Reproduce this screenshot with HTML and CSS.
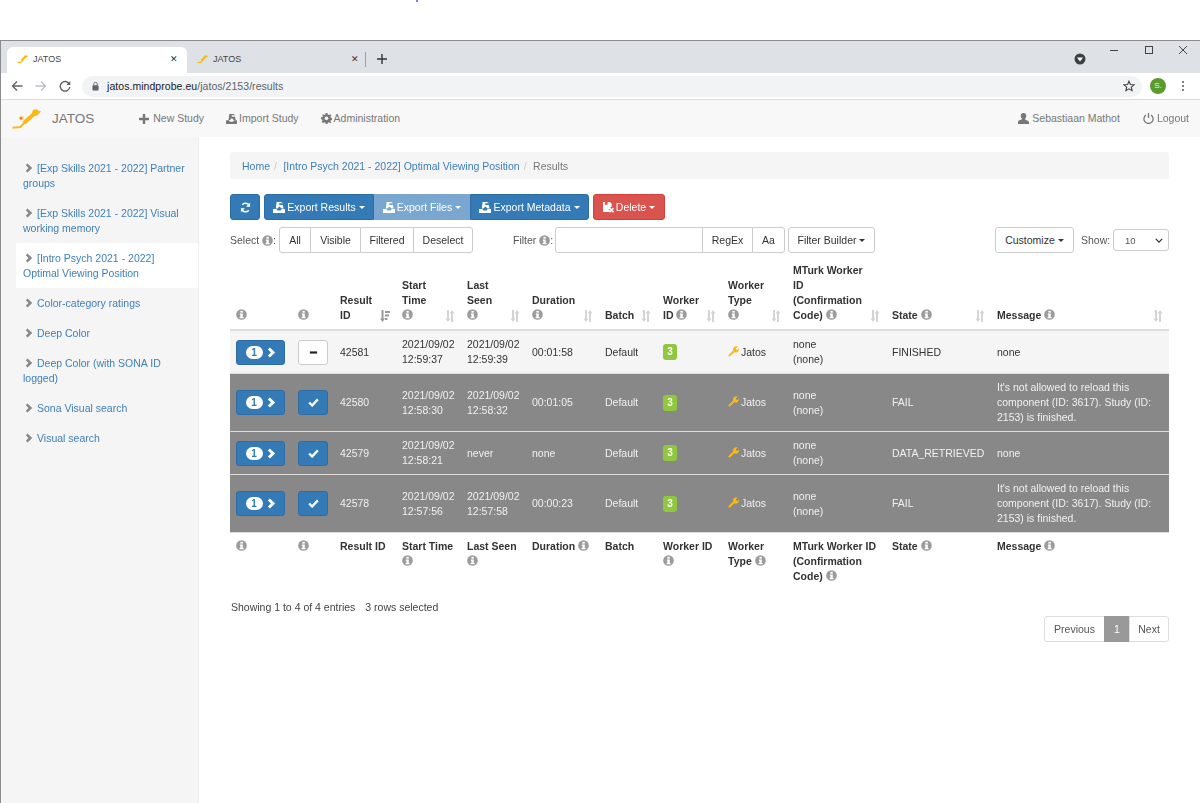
FILE: index.html
```html
<!DOCTYPE html>
<html lang="en">
<head>
<meta charset="utf-8">
<title>JATOS</title>
<link rel="stylesheet" href="styles.css">
</head>
<body>
<svg class="sprite" aria-hidden="true">
  <symbol id="info" viewBox="0 0 12 12"><circle cx="6" cy="6" r="5.800" fill="currentColor"/><rect x="4.800" y="2" width="2.600" height="2" fill="#fff"/><path d="M4.200 5h3.200v3.600h.9V10H3.900V8.600h.9V6.300h-.6z" fill="#fff"/></symbol>
  <symbol id="sort" viewBox="0 0 10 12"><path d="M2 0h2v8.500h1.500L3 12 .5 8.500H2zM8 12H6V3.500H4.500L7 0l2.500 3.500H8z" fill="currentColor"/></symbol>
  <symbol id="sortact" viewBox="0 0 10 12"><path d="M1.500 0h2v8.500H5L2.500 12 0 8.500h1.500zM5 1h5v2H5zM5 4.500h4v2H5zM5 8h2.500v2H5z" fill="currentColor"/></symbol>
  <symbol id="export" viewBox="0 0 12 11"><path d="M0 7h3.200l1.300 1.400h3L8.800 7H12v4H0z" fill="currentColor"/><path d="M2.800 6.600 3.600 0H8l2.200 1.300H6.200V3h3.600l.8 3.600H8.500L6.300 4.400 4.500 6.600z" fill="currentColor"/></symbol>
  <symbol id="wrench" viewBox="0 0 12 12"><path d="M1.600 11.800.2 10.400 5.600 5C5.200 3.400 5.700 1.800 7 .9 8.100.2 9.400.1 10.500.5L8.600 2.500l.3 1.400 1.400.4 1.400-1.800C12.100 3.800 11.800 5.300 10.900 6.200 9.800 7.200 8.400 7.400 7 6.900z" fill="currentColor"/></symbol>
  <symbol id="chev" viewBox="0 0 10 12"><path d="M3.200.5 9 6l-5.800 5.500L1 9.300 4.400 6 1 2.700z" fill="currentColor"/></symbol>
  <symbol id="caret" viewBox="0 0 8 4"><path d="M0 0h8L4 4z" fill="currentColor"/></symbol>
  <symbol id="fav" viewBox="0 0 11 8"><path d="M.5 7.500h3l3-3" fill="none" stroke="#fdb913" stroke-width="1.300"/><path d="M4.500 5.500 8.500 1.500" fill="none" stroke="#fdb913" stroke-width="2"/><circle cx="8.500" cy="1.500" r="1.300" fill="#fdb913"/><path d="M8.500.8h2.500v1H8.500z" fill="#fdb913"/></symbol>
</svg>

<div class="top-gap"><span class="speck"></span></div>
<div class="window">
  <div class="tabstrip">
    <div class="tab tab-active">
      <svg class="favicon"><use href="#fav"/></svg>
      <span class="tab-title">JATOS</span><span class="tab-close">✕</span>
    </div>
    <div class="tab">
      <svg class="favicon"><use href="#fav"/></svg>
      <span class="tab-title">JATOS</span><span class="tab-close">✕</span>
    </div>
    <span class="tab-sep"></span>
    <svg class="tab-plus" viewBox="0 0 10 10"><path d="M4.300 0h1.400v4.300H10v1.400H5.700V10H4.300V5.700H0V4.300h4.300z" fill="#333"/></svg>
    <span class="strip-fill"></span>
    <svg class="media" viewBox="0 0 12 12"><circle cx="6" cy="6" r="5.500" fill="#3c4043"/><path d="M3 4.500h6L6 8.500z" fill="#fff"/></svg>
    <div class="win-controls">
      <svg viewBox="0 0 10 10"><rect x="1" y="5" width="8" height="1" fill="#444"/></svg>
      <svg viewBox="0 0 10 10"><rect x="1.500" y="1.500" width="7" height="7" fill="none" stroke="#444"/></svg>
      <svg viewBox="0 0 10 10"><path d="M1 1l8 8M9 1l-8 8" stroke="#444" fill="none"/></svg>
    </div>
  </div>
  <div class="toolbar">
    <svg class="tb-ic" viewBox="0 0 12 12"><path d="M11.500 6H1.500M6 1.500 1.500 6 6 10.500" fill="none" stroke="#5f6368" stroke-width="1.400"/></svg>
    <svg class="tb-ic" viewBox="0 0 12 12"><path d="M.5 6h10M6 1.500 10.500 6 6 10.500" fill="none" stroke="#bdc1c6" stroke-width="1.400"/></svg>
    <svg class="tb-ic" viewBox="0 0 12 12"><path d="M10.300 4A4.800 4.800 0 1 0 10.800 7" fill="none" stroke="#5f6368" stroke-width="1.400"/><path d="M11.300 1v4h-4z" fill="#5f6368"/></svg>
    <div class="omnibox">
      <svg class="lock" viewBox="0 0 8 10"><rect x=".5" y="4" width="7" height="6" rx="1" fill="#5f6368"/><path d="M2 4.500V2.800a2 2 0 0 1 4 0v1.700" fill="none" stroke="#5f6368"/></svg>
      <span class="url"><span class="url-host">jatos.mindprobe.eu</span>/jatos/2153/results</span>
      <svg class="star" viewBox="0 0 12 12"><path d="M6 1.200 7.400 4.500l3.600.3-2.700 2.400.8 3.500L6 8.800 2.900 10.700l.8-3.500L1 4.800l3.600-.3z" fill="none" stroke="#444" stroke-width="1.100"/></svg>
    </div>
    <span class="avatar">S.</span>
    <svg class="menu-dots" viewBox="0 0 4 12"><circle cx="2" cy="2" r="1.100" fill="#5f6368"/><circle cx="2" cy="6" r="1.100" fill="#5f6368"/><circle cx="2" cy="10" r="1.100" fill="#5f6368"/></svg>
  </div>

  <nav class="navbar">
    <svg class="logo" viewBox="0 0 29 20"><path d="M.5 18.700 8.500 18 12.500 13.500" fill="none" stroke="#fdb913" stroke-width="2"/><path d="M12 14 23 4" fill="none" stroke="#fdb913" stroke-width="4"/><circle cx="23.500" cy="3.500" r="3.200" fill="#fdb913"/><path d="M24 2h5l-1.500 2.500H24z" fill="#fdb913"/><circle cx="9.500" cy="9" r="2.400" fill="#fde08a"/><circle cx="9" cy="9.300" r="1.400" fill="#f0742a"/></svg>
    <span class="brand">JATOS</span>
    <a class="nav-link nav-new"><svg class="nav-ic" viewBox="0 0 10 10"><path d="M3.800 0h2.400v3.800H10v2.400H6.200V10H3.800V6.200H0V3.800h3.800z" fill="currentColor"/></svg>New Study</a>
    <a class="nav-link nav-import"><svg class="nav-ic"><use href="#export"/></svg>Import Study</a>
    <a class="nav-link"><svg class="nav-ic-gear" viewBox="0 0 12 12"><path d="M5 0h2l.3 1.700 1.200.5L10 1.300l1.300 1.400-1 1.400.5 1.200 1.700.3v2l-1.700.3-.5 1.200 1 1.400L10 11l-1.500-.9-1.200.5L7 12H5l-.3-1.400-1.200-.5L2 11 .7 9.600l1-1.400-.5-1.200L0 6.700v-2l1.700-.3.5-1.200-1-1.400L2 1.300l1.500.9 1.200-.5z" fill="currentColor"/><circle cx="6" cy="5.800" r="2" fill="#f8f8f8"/></svg>Administration</a>
    <span class="strip-fill"></span>
    <a class="nav-link nav-user"><svg class="nav-ic" viewBox="0 0 12 12"><path d="M6 0c2 0 3 1.400 3 3.200 0 1.300-.6 2.400-1.300 3v1l3.300 1.500c.6.300 1 .8 1 1.500V12H0v-2.200c0-.7.400-1.200 1-1.500l3.300-1.500v-1C3.600 5.600 3 4.500 3 3.200 3 1.400 4 0 6 0z" fill="currentColor"/></svg>Sebastiaan Mathot</a>
    <a class="nav-link nav-logout"><svg class="nav-ic" viewBox="0 0 12 12"><path d="M3.300 2.200a5 5 0 1 0 5.400 0" fill="none" stroke="currentColor" stroke-width="1.400"/><rect x="5.300" y="0" width="1.400" height="5.500" fill="currentColor"/></svg>Logout</a>
  </nav>

  <div class="main">
    <aside class="sidebar">
      <a class="study"><svg class="study-chev"><use href="#chev"/></svg>[Exp Skills 2021 - 2022] Partner groups</a>
      <a class="study"><svg class="study-chev"><use href="#chev"/></svg>[Exp Skills 2021 - 2022] Visual working memory</a>
      <a class="study study-active"><svg class="study-chev"><use href="#chev"/></svg>[Intro Psych 2021 - 2022] Optimal Viewing Position</a>
      <a class="study"><svg class="study-chev"><use href="#chev"/></svg>Color-category ratings</a>
      <a class="study"><svg class="study-chev"><use href="#chev"/></svg>Deep Color</a>
      <a class="study"><svg class="study-chev"><use href="#chev"/></svg>Deep Color (with SONA ID logged)</a>
      <a class="study"><svg class="study-chev"><use href="#chev"/></svg>Sona Visual search</a>
      <a class="study"><svg class="study-chev"><use href="#chev"/></svg>Visual search</a>
    </aside>

    <section class="content">
      <div class="breadcrumb"><a>Home</a><span class="crumb-sep">/</span><a>[Intro Psych 2021 - 2022] Optimal Viewing Position</a><span class="crumb-sep">/</span><span class="crumb-cur">Results</span></div>

      <div class="actions">
        <button class="btn btn-blue btn-refresh"><svg class="ic-refresh" viewBox="0 0 12 12"><path d="M10.200 4.200A4.500 4.500 0 0 0 2.500 3M1.800 7.800A4.500 4.500 0 0 0 9.500 9" fill="none" stroke="#fff" stroke-width="1.700"/><path d="M11 .8v4.400H6.600zM1 11.200V6.800h4.400z" fill="#fff"/></svg></button>
        <div class="btn-group">
          <button class="btn btn-blue w-er"><svg class="ic-export"><use href="#export"/></svg>Export Results<svg class="caret"><use href="#caret"/></svg></button>
          <button class="btn btn-lite w-ef"><svg class="ic-export"><use href="#export"/></svg>Export Files<svg class="caret"><use href="#caret"/></svg></button>
          <button class="btn btn-blue w-em"><svg class="ic-export"><use href="#export"/></svg>Export Metadata<svg class="caret"><use href="#caret"/></svg></button>
        </div>
        <button class="btn btn-red w-del"><svg class="ic-del" viewBox="0 0 12 12"><path d="M0 0h7.500l2 2v3L6 8l1.500 1.500L6 11H0z" fill="#fff"/><rect x="2" y="0" width="3" height="3" fill="#d9534f"/><path d="M7 6.500l4.500 4.500M11.500 6.500 7 11" stroke="#fff" stroke-width="1.700"/></svg>Delete<svg class="caret"><use href="#caret"/></svg></button>
      </div>

      <div class="filters">
        <span class="lbl lbl-select">Select <svg class="info"><use href="#info"/></svg>:</span>
        <div class="seg seg-select">
          <button class="btn btn-def">All</button><button class="btn btn-def">Visible</button><button class="btn btn-def">Filtered</button><button class="btn btn-def">Deselect</button>
        </div>
        <span class="lbl lbl-filter">Filter <svg class="info"><use href="#info"/></svg>:</span>
        <div class="seg seg-filter">
          <span class="input"></span><button class="btn btn-def w-re">RegEx</button><button class="btn btn-def w-aa">Aa</button>
        </div>
        <button class="btn btn-def w-fb">Filter Builder<svg class="caret"><use href="#caret"/></svg></button>
        <span class="strip-fill"></span>
        <button class="btn btn-def w-cu">Customize<svg class="caret"><use href="#caret"/></svg></button>
        <span class="lbl lbl-show">Show:</span>
        <span class="select">10<svg class="sel-chev" viewBox="0 0 10 6"><path d="M1 1l4 4 4-4" fill="none" stroke="#333" stroke-width="1.600"/></svg></span>
      </div>

      <table class="results">
        <colgroup>
          <col class="c1"><col class="c2"><col class="c3"><col class="c4"><col class="c5"><col class="c6"><col class="c7"><col class="c8"><col class="c9"><col class="c10"><col class="c11"><col class="c12">
        </colgroup>
        <thead>
          <tr>
            <th><svg class="info"><use href="#info"/></svg></th>
            <th><svg class="info"><use href="#info"/></svg></th>
            <th class="sorting">Result<br>ID<svg class="sort sort-act"><use href="#sortact"/></svg></th>
            <th class="sorting">Start<br>Time<br><svg class="info"><use href="#info"/></svg><svg class="sort"><use href="#sort"/></svg></th>
            <th class="sorting">Last<br>Seen<br><svg class="info"><use href="#info"/></svg><svg class="sort"><use href="#sort"/></svg></th>
            <th class="sorting">Duration<br><svg class="info"><use href="#info"/></svg><svg class="sort"><use href="#sort"/></svg></th>
            <th class="sorting">Batch<svg class="sort"><use href="#sort"/></svg></th>
            <th class="sorting">Worker<br>ID <svg class="info"><use href="#info"/></svg><svg class="sort"><use href="#sort"/></svg></th>
            <th class="sorting">Worker<br>Type<br><svg class="info"><use href="#info"/></svg><svg class="sort"><use href="#sort"/></svg></th>
            <th class="sorting">MTurk Worker<br>ID<br>(Confirmation<br>Code) <svg class="info"><use href="#info"/></svg><svg class="sort"><use href="#sort"/></svg></th>
            <th class="sorting">State <svg class="info"><use href="#info"/></svg><svg class="sort"><use href="#sort"/></svg></th>
            <th class="sorting">Message <svg class="info"><use href="#info"/></svg><svg class="sort"><use href="#sort"/></svg></th>
          </tr>
        </thead>
        <tbody>
          <tr class="row-light">
            <td><button class="btn btn-blue btn-expand"><span class="pill">1</span><svg class="exp-chev"><use href="#chev"/></svg></button></td>
            <td><button class="btn btn-check btn-check-off"><svg class="ic-minus" viewBox="0 0 10 10"><rect x="1" y="3.800" width="8" height="2.400" fill="#222"/></svg></button></td>
            <td>42581</td>
            <td>2021/09/02<br>12:59:37</td>
            <td>2021/09/02<br>12:59:39</td>
            <td>00:01:58</td>
            <td>Default</td>
            <td><span class="badge">3</span></td>
            <td><svg class="wrench"><use href="#wrench"/></svg>Jatos</td>
            <td>none<br>(none)</td>
            <td>FINISHED</td>
            <td>none</td>
          </tr>
          <tr class="row-sel">
            <td><button class="btn btn-blue btn-expand"><span class="pill">1</span><svg class="exp-chev"><use href="#chev"/></svg></button></td>
            <td><button class="btn btn-blue btn-check"><svg class="ic-check" viewBox="0 0 12 10"><path d="M1.200 5 4.500 8.300 10.800 1.500" fill="none" stroke="#fff" stroke-width="2.600"/></svg></button></td>
            <td>42580</td>
            <td>2021/09/02<br>12:58:30</td>
            <td>2021/09/02<br>12:58:32</td>
            <td>00:01:05</td>
            <td>Default</td>
            <td><span class="badge">3</span></td>
            <td><svg class="wrench"><use href="#wrench"/></svg>Jatos</td>
            <td>none<br>(none)</td>
            <td>FAIL</td>
            <td>It's not allowed to reload this component (ID: 3617). Study (ID: 2153) is finished.</td>
          </tr>
          <tr class="row-sel">
            <td><button class="btn btn-blue btn-expand"><span class="pill">1</span><svg class="exp-chev"><use href="#chev"/></svg></button></td>
            <td><button class="btn btn-blue btn-check"><svg class="ic-check" viewBox="0 0 12 10"><path d="M1.200 5 4.500 8.300 10.800 1.500" fill="none" stroke="#fff" stroke-width="2.600"/></svg></button></td>
            <td>42579</td>
            <td>2021/09/02<br>12:58:21</td>
            <td>never</td>
            <td>none</td>
            <td>Default</td>
            <td><span class="badge">3</span></td>
            <td><svg class="wrench"><use href="#wrench"/></svg>Jatos</td>
            <td>none<br>(none)</td>
            <td>DATA_RETRIEVED</td>
            <td>none</td>
          </tr>
          <tr class="row-sel">
            <td><button class="btn btn-blue btn-expand"><span class="pill">1</span><svg class="exp-chev"><use href="#chev"/></svg></button></td>
            <td><button class="btn btn-blue btn-check"><svg class="ic-check" viewBox="0 0 12 10"><path d="M1.200 5 4.500 8.300 10.800 1.500" fill="none" stroke="#fff" stroke-width="2.600"/></svg></button></td>
            <td>42578</td>
            <td>2021/09/02<br>12:57:56</td>
            <td>2021/09/02<br>12:57:58</td>
            <td>00:00:23</td>
            <td>Default</td>
            <td><span class="badge">3</span></td>
            <td><svg class="wrench"><use href="#wrench"/></svg>Jatos</td>
            <td>none<br>(none)</td>
            <td>FAIL</td>
            <td>It's not allowed to reload this component (ID: 3617). Study (ID: 2153) is finished.</td>
          </tr>
        </tbody>
        <tfoot>
          <tr>
            <th><svg class="info"><use href="#info"/></svg></th>
            <th><svg class="info"><use href="#info"/></svg></th>
            <th>Result ID</th>
            <th>Start Time <svg class="info"><use href="#info"/></svg></th>
            <th>Last Seen <svg class="info"><use href="#info"/></svg></th>
            <th>Duration <svg class="info"><use href="#info"/></svg></th>
            <th>Batch</th>
            <th>Worker ID <svg class="info"><use href="#info"/></svg></th>
            <th>Worker Type <svg class="info"><use href="#info"/></svg></th>
            <th>MTurk Worker ID (Confirmation Code) <svg class="info"><use href="#info"/></svg></th>
            <th>State <svg class="info"><use href="#info"/></svg></th>
            <th>Message <svg class="info"><use href="#info"/></svg></th>
          </tr>
        </tfoot>
      </table>

      <div class="info-line">Showing 1 to 4 of 4 entries<span class="sel-count">3 rows selected</span></div>
      <div class="pagination"><a class="page w-prev">Previous</a><a class="page page-cur">1</a><a class="page w-next">Next</a></div>
    </section>
  </div>
</div>
</body>
</html>
```
FILE: styles.css
```css
* { box-sizing: border-box; }
html, body { margin: 0; padding: 0; height: 100%; }
body {
  height: 803px;
  overflow: hidden;
  background: #fff;
  font-family: "Liberation Sans", Arial, sans-serif;
  font-size: 10.5px;
  line-height: 15px;
  color: #333;
  display: flex;
  flex-direction: column;
}
.sprite { display: none; }
.top-gap { height: 40px; flex: none; padding-left: 416px; }
.speck { display: block; width: 2px; height: 2px; background: #7f86c8; }
.window {
  flex: 1;
  min-height: 0;
  display: flex;
  flex-direction: column;
  border-top: 1px solid #8c8c8c;
  border-left: 1px solid #8c8c8c;
  filter: blur(.3px);
}
.strip-fill { flex: 1; }

/* tabs */
.tabstrip {
  height: 32px;
  flex: none;
  background: #dee1e6;
  display: flex;
  align-items: flex-end;
  padding-left: 6px;
}
.tab {
  width: 178px;
  height: 26px;
  display: flex;
  align-items: center;
  padding: 0 6px 2px 10px;
  font-size: 9px;
  color: #444;
}
.tab-active { width: 180px; background: #fff; border-radius: 6px 6px 0 0; }
.favicon { width: 11px; height: 8px; margin-right: 5px; flex: none; }
.tab-title { flex: 1; }
.tab-close { font-size: 9px; color: #333; margin-right: 0; }
.tab-active .tab-close { margin-right: 3px; }
.tab-sep { width: 1px; height: 15px; background: #9aa0a6; margin: 0 0 6px 0; }
.tab-plus { width: 10px; height: 10px; margin: 0 0 9px 11px; }
.media { width: 12px; height: 12px; margin: 0 3px 8px 0; }
.win-controls { display: flex; align-self: flex-start; gap: 24.500px; margin: 4px 12px 0 20px; }
.win-controls svg { width: 10px; height: 10px; }

/* browser toolbar */
.toolbar {
  height: 27px;
  flex: none;
  background: #fff;
  border-bottom: 1px solid #dadce0;
  display: flex;
  align-items: center;
  padding: 0 10px 0 10px;
}
.tb-ic { width: 12px; height: 12px; margin-right: 12px; flex: none; }
.omnibox {
  width: 1060px;
  height: 21px;
  margin-left: -1px;
  background: #f1f3f4;
  border-radius: 11px;
  display: flex;
  align-items: center;
  padding: 0 7px 0 10px;
  font-size: 10.500px;
  color: #5f6368;
}
.lock { width: 7px; height: 10px; margin-right: 8px; flex: none; }
.url { flex: 1; letter-spacing: .05px; }
.url-host { color: #202124; }
.star { width: 12px; height: 12px; }
.avatar {
  width: 16px; height: 16px; border-radius: 50%;
  background: #5b9b2c; color: #e8f3dc;
  font-size: 8px; line-height: 16px; text-align: center;
  margin-left: 8px; flex: none;
}
.menu-dots { width: 4px; height: 12px; margin-left: 15px; }

/* JATOS navbar */
.navbar {
  height: 37px;
  flex: none;
  background: #f8f8f8;
  display: flex;
  align-items: center;
  padding-left: 11px;
  color: #777;
}
.logo { width: 29px; height: 20px; flex: none; }
.brand { font-size: 13.500px; margin-left: 11px; margin-right: 45px; }
.nav-link { display: flex; align-items: center; color: #777; margin-right: 22px; }
.nav-ic { width: 10px; height: 10px; margin-right: 4px; flex: none; }
.nav-import .nav-ic { width: 11px; margin-right: 2px; }
.nav-ic-gear { width: 11px; height: 11px; margin-right: 2px; flex: none; }
.nav-user { margin-right: 23px; }
.nav-user .nav-ic, .nav-logout .nav-ic { width: 11px; height: 11px; margin-right: 3px; }
.nav-logout { margin-right: 11px; }

/* main */
.main { flex: 1; min-height: 0; display: flex; }
.sidebar {
  width: 198px;
  flex: none;
  background: #f5f5f5;
  padding: 16px 0 0 15px;
  border-right: 1px solid #eee;
}
.study { display: block; padding: 7.500px 7px; color: #3f7fb9; }
.study-active { background: #fff; }
.study-chev { width: 8px; height: 10px; margin: 0 4px 0 2px; color: #888; vertical-align: -1px; }

.content { flex: 1; min-width: 0; padding: 15px 31px 0 31px; }
.breadcrumb {
  height: 27px;
  background: #f5f5f5;
  border-radius: 3px;
  padding: 7px 12px 0;
  color: #777;
}
.breadcrumb a { color: #3f7fb9; }
.crumb-sep { color: #ccc; padding: 0 6.500px 0 4px; }

/* buttons */
.btn {
  font-family: inherit;
  font-size: 10.500px;
  line-height: 15px;
  height: 26px;
  padding: 0;
  border: 1px solid transparent;
  border-radius: 3px;
  display: inline-flex;
  align-items: center;
  justify-content: center;
  background: none;
}
.btn-blue { background: #337ab7; border-color: #2e6da4; color: #fff; }
.btn-lite { background: #7aa7d0; border-color: #7aa7d0; color: #fff; }
.btn-red { background: #d9534f; border-color: #d43f3a; color: #fff; }
.btn-def { background: #fff; border-color: #ccc; color: #333; }
.actions { display: flex; margin-top: 15px; }
.btn-refresh { width: 30px; margin-right: 4px; }
.ic-refresh { width: 11px; height: 11px; }
.btn-group { display: flex; margin-right: 4px; }
.btn-group .btn { border-radius: 0; }
.btn-group .btn:first-child { border-radius: 3px 0 0 3px; }
.btn-group .btn:last-child { border-radius: 0 3px 3px 0; }
.w-er { width: 110px; }
.w-ef { width: 96px; }
.w-em { width: 119px; }
.w-del { width: 72px; }
.ic-export { width: 12px; height: 11px; margin-right: 2px; }
.ic-del { width: 11px; height: 11px; margin-right: 2px; }
.caret { width: 6px; height: 3px; margin-left: 3px; }

/* filters */
.filters { display: flex; align-items: center; margin-top: 7px; height: 26px; }
.lbl { color: #555; display: inline-flex; align-items: center; white-space: pre; }
.lbl-select { width: 49px; }
.lbl-filter { width: 42px; margin-left: 40px; }
.lbl-show { margin-left: 7px; width: 32px; }
.info { width: 11px; height: 11px; color: #9c9c9c; vertical-align: -1px; }
.lbl .info { color: #999; margin: 0; }
.seg { display: flex; }
.seg .btn { border-radius: 0; margin-left: -1px; }
.seg .btn:first-child { border-radius: 3px 0 0 3px; margin-left: 0; }
.seg .btn:last-child { border-radius: 0 3px 3px 0; }
.seg-select .btn:nth-child(1) { width: 32px; }
.seg-select .btn:nth-child(2) { width: 51px; }
.seg-select .btn:nth-child(3) { width: 54px; }
.seg-select .btn:nth-child(4) { width: 60px; }
.input { width: 148px; height: 26px; background: #fff; border: 1px solid #ccc; border-radius: 3px 0 0 3px; }
.seg-filter .w-re { width: 51px; }
.seg-filter .w-aa { width: 33px; }
.w-fb { width: 87px; margin-left: 3px; }
.w-cu { width: 79px; }
.select {
  width: 56px; height: 22px;
  border: 1px solid #ccc; border-radius: 3px;
  background: #fff;
  display: flex; align-items: center; justify-content: space-between;
  padding: 0 5px 0 11px;
  font-size: 9.500px;
  color: #555;
}
.sel-chev { width: 8px; height: 5px; }

/* table */
.results {
  width: 939px;
  table-layout: fixed;
  border-collapse: collapse;
  margin-top: 4px;
}
.c1 { width: 62px; } .c2 { width: 42px; } .c3 { width: 62px; } .c4 { width: 65px; }
.c5 { width: 65px; } .c6 { width: 73px; } .c7 { width: 58px; } .c8 { width: 65px; }
.c9 { width: 65px; } .c10 { width: 99px; } .c11 { width: 105px; } .c12 { width: 178px; }
.results th, .results td { padding: 6px; text-align: left; }
.results td { vertical-align: middle; border-top: 1px solid #ddd; }
.results thead th { vertical-align: bottom; border-bottom: 2px solid #ddd; font-weight: bold; color: #333; position: relative; }
.results tfoot th { vertical-align: top; border-top: 1px solid #ddd; }
.sort { position: absolute; right: 6px; bottom: 7px; width: 10px; height: 12px; color: #d4d4d4; }
.sort-act { color: #999; }
.row-light td { background: #f5f5f5; color: #333; }
.row-sel td { background: #888; color: #f0f0f0; }
.btn-expand { width: 49px; height: 25px; }
.pill {
  width: 17px; height: 13px; border-radius: 7px;
  background: #fff; color: #337ab7;
  font-size: 10px; font-weight: bold; line-height: 13px; text-align: center;
}
.exp-chev { width: 9px; height: 11px; margin-left: 4px; }
.btn-check { width: 30px; height: 25px; }
.btn-check-off { background: #fff; border-color: #ccc; }
.ic-minus { width: 9px; height: 9px; }
.ic-check { width: 11px; height: 9px; }
.badge {
  display: inline-block;
  width: 14px; height: 16px;
  background: #8fc73e;
  color: #fff;
  border-radius: 3px;
  text-align: center;
  font-size: 10px;
  line-height: 16px;
  font-weight: bold;
  vertical-align: middle;
}
.wrench { width: 11px; height: 11px; color: #fdb913; margin-right: 2px; vertical-align: -1px; }

/* footer */
.info-line { margin-top: 10px; padding-left: 1px; color: #444; }
.sel-count { margin-left: 10px; }
.pagination { display: flex; justify-content: flex-end; margin-top: 1px; }
.page {
  height: 26px;
  border: 1px solid #ddd;
  margin-left: -1px;
  background: #fff;
  color: #555;
  display: flex; align-items: center; justify-content: center;
}
.w-prev { width: 61px; border-radius: 3px 0 0 3px; }
.page-cur { width: 26px; background: #999; border-color: #999; color: #fff; }
.w-next { width: 40px; border-radius: 0 3px 3px 0; }
```
